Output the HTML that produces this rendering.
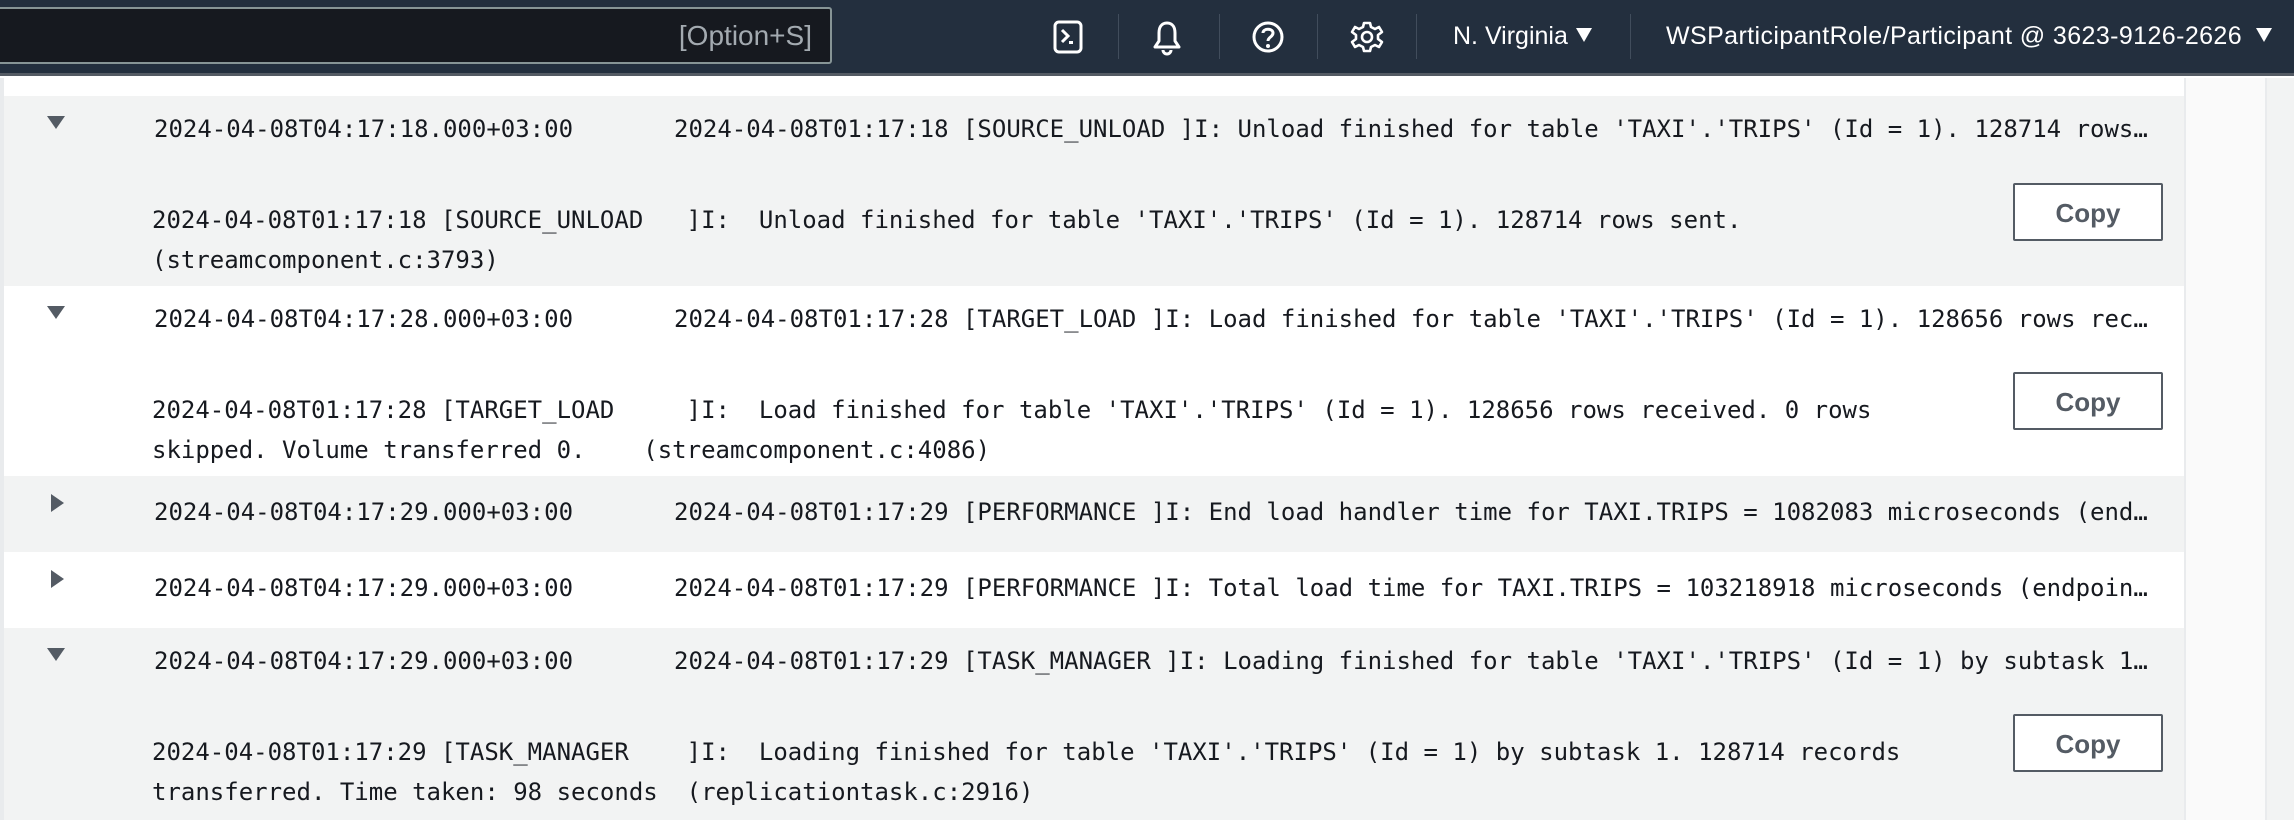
<!DOCTYPE html>
<html><head><meta charset="utf-8"><style>
*{margin:0;padding:0;box-sizing:border-box}
body{width:2294px;height:820px;overflow:hidden;background:#fff;position:relative;font-family:"Liberation Sans",sans-serif}
.nav{position:absolute;left:0;top:0;width:2294px;height:76px;background:#232f3e;border-bottom:3px solid #545b64}
.search{position:absolute;left:-10px;top:7px;width:842px;height:57px;background:#16191f;border:2px solid #879596;border-radius:3px}
.search span{position:absolute;right:18px;top:11px;color:#a3aab0;font-size:28px}
.sep{position:absolute;top:14px;width:1px;height:45px;background:#414d5c}
.ico{position:absolute;top:20px}
.nt{position:absolute;top:22px;color:#fff;font-size:25px}
.caret{display:inline-block;width:0;height:0;border-left:8px solid transparent;border-right:8px solid transparent;border-top:14px solid #fff;vertical-align:middle;margin-left:8px;position:relative;top:-2px}
.left{position:absolute;left:0;top:78px;width:4px;height:742px;background:#e9ebed}
.right{position:absolute;left:2184px;top:78px;width:2px;height:742px;background:#e9ebed}
.right2{position:absolute;left:2186px;top:78px;width:80px;height:742px;background:#fafafa}
.right3{position:absolute;left:2265px;top:78px;width:29px;height:742px;background:#f2f3f3;border-left:2px solid #e9ebed}
.row{position:absolute;left:4px;width:2180px}
.g{background:#f2f3f3}
.m{font-family:"DejaVu Sans Mono","Liberation Mono",monospace;font-size:24px;color:#16191f;position:absolute;white-space:pre}
.ts{left:150px}
.msg{left:670px;width:1476px;overflow:hidden;text-overflow:ellipsis}
.det{left:148px;line-height:39.5px}
.tri{position:absolute;left:43px;width:0;height:0}
.down{border-left:9px solid transparent;border-right:9px solid transparent;border-top:13px solid #545b64}
.rt{border-top:9px solid transparent;border-bottom:9px solid transparent;border-left:13px solid #545b64;left:47px}
.copy{position:absolute;left:2009px;width:150px;height:58px;background:#fff;border:2px solid #545b64;border-radius:2px;font-weight:bold;font-size:26px;color:#545b64;text-align:center;line-height:56px}
</style></head><body>
<div class="nav">
 <div class="search"><span>[Option+S]</span></div>
 <svg class="ico" style="left:1053px" width="30" height="34" viewBox="0 0 30 34"><rect x="2" y="2" width="26" height="30" rx="4" fill="none" stroke="#fff" stroke-width="3"/><path d="M9 10 L15 16 L9 22" fill="none" stroke="#fff" stroke-width="3"/><rect x="16" y="21" width="4" height="3" fill="#fff"/></svg>
 <div class="sep" style="left:1118px"></div>
 <svg class="ico" style="left:1152px" width="30" height="36" viewBox="0 0 30 36"><path d="M15 3 C9 3 7 8 7 13 L7 21 L3 27 L27 27 L23 21 L23 13 C23 8 21 3 15 3Z" fill="none" stroke="#fff" stroke-width="3" stroke-linejoin="round"/><path d="M11 30 A4 4 0 0 0 19 30" fill="none" stroke="#fff" stroke-width="3"/></svg>
 <div class="sep" style="left:1219px"></div>
 <svg class="ico" style="left:1251px" width="34" height="34" viewBox="0 0 34 34"><circle cx="17" cy="17" r="14" fill="none" stroke="#fff" stroke-width="3"/><path d="M12 13 C12 8 22 8 22 13 C22 17 17 17 17 21" fill="none" stroke="#fff" stroke-width="3"/><circle cx="17" cy="26" r="2" fill="#fff"/></svg>
 <div class="sep" style="left:1317px"></div>
 <svg class="ico" style="left:1350px" width="34" height="34" viewBox="0 0 34 34"><path d="M14 3 H20 L21 7 L25 9 L29 7 L32 12 L28 15 V19 L32 22 L29 27 L25 25 L21 27 L20 31 H14 L13 27 L9 25 L5 27 L2 22 L6 19 V15 L2 12 L5 7 L9 9 L13 7 Z" fill="none" stroke="#fff" stroke-width="2.6" stroke-linejoin="round"/><circle cx="17" cy="17" r="5" fill="none" stroke="#fff" stroke-width="2.6"/></svg>
 <div class="sep" style="left:1416px"></div>
 <div class="nt" style="left:1453px">N. Virginia<span class="caret"></span></div>
 <div class="sep" style="left:1630px"></div>
 <div class="nt" style="left:1666px;letter-spacing:0.4px">WSParticipantRole/Participant @ 3623-9126-2626<span class="caret" style="margin-left:14px"></span></div>
</div>
<div class="left"></div><div class="right"></div><div class="right2"></div><div class="right3"></div>

<div class="row g" style="top:96px;height:190px">
 <div class="tri down" style="top:20px"></div>
 <div class="m ts" style="top:19px">2024-04-08T04:17:18.000+03:00</div>
 <div class="m msg" style="top:19px">2024-04-08T01:17:18 [SOURCE_UNLOAD ]I: Unload finished for table 'TAXI'.'TRIPS' (Id = 1). 128714 rows sent.</div>
 <div class="m det" style="top:105px">2024-04-08T01:17:18 [SOURCE_UNLOAD   ]I:  Unload finished for table 'TAXI'.'TRIPS' (Id = 1). 128714 rows sent.
(streamcomponent.c:3793)</div>
 <div class="copy" style="top:87px">Copy</div>
</div>
<div class="row" style="top:286px;height:190px">
 <div class="tri down" style="top:20px"></div>
 <div class="m ts" style="top:19px">2024-04-08T04:17:28.000+03:00</div>
 <div class="m msg" style="top:19px">2024-04-08T01:17:28 [TARGET_LOAD ]I: Load finished for table 'TAXI'.'TRIPS' (Id = 1). 128656 rows received.</div>
 <div class="m det" style="top:105px">2024-04-08T01:17:28 [TARGET_LOAD     ]I:  Load finished for table 'TAXI'.'TRIPS' (Id = 1). 128656 rows received. 0 rows
skipped. Volume transferred 0.    (streamcomponent.c:4086)</div>
 <div class="copy" style="top:86px">Copy</div>
</div>
<div class="row g" style="top:476px;height:76px">
 <div class="tri rt" style="top:18px"></div>
 <div class="m ts" style="top:22px">2024-04-08T04:17:29.000+03:00</div>
 <div class="m msg" style="top:22px">2024-04-08T01:17:29 [PERFORMANCE ]I: End load handler time for TAXI.TRIPS = 1082083 microseconds (endpoint)</div>
</div>
<div class="row" style="top:552px;height:76px">
 <div class="tri rt" style="top:18px"></div>
 <div class="m ts" style="top:22px">2024-04-08T04:17:29.000+03:00</div>
 <div class="m msg" style="top:22px">2024-04-08T01:17:29 [PERFORMANCE ]I: Total load time for TAXI.TRIPS = 103218918 microseconds (endpoint)</div>
</div>
<div class="row g" style="top:628px;height:192px">
 <div class="tri down" style="top:20px"></div>
 <div class="m ts" style="top:19px">2024-04-08T04:17:29.000+03:00</div>
 <div class="m msg" style="top:19px">2024-04-08T01:17:29 [TASK_MANAGER ]I: Loading finished for table 'TAXI'.'TRIPS' (Id = 1) by subtask 1. 128714 records</div>
 <div class="m det" style="top:105px">2024-04-08T01:17:29 [TASK_MANAGER    ]I:  Loading finished for table 'TAXI'.'TRIPS' (Id = 1) by subtask 1. 128714 records
transferred. Time taken: 98 seconds  (replicationtask.c:2916)</div>
 <div class="copy" style="top:86px">Copy</div>
</div>
</body></html>
